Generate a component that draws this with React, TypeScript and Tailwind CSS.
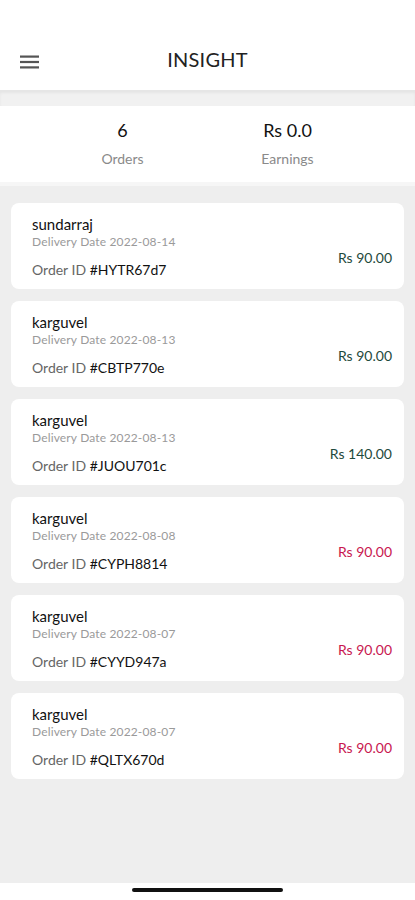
import React from "react";

type Order = { name: string; date: string; id: string; price: string; paid: boolean };

const orders: Order[] = [
  { name: "sundarraj", date: "2022-08-14", id: "#HYTR67d7", price: "Rs 90.00", paid: true },
  { name: "karguvel", date: "2022-08-13", id: "#CBTP770e", price: "Rs 90.00", paid: true },
  { name: "karguvel", date: "2022-08-13", id: "#JUOU701c", price: "Rs 140.00", paid: true },
  { name: "karguvel", date: "2022-08-08", id: "#CYPH8814", price: "Rs 90.00", paid: false },
  { name: "karguvel", date: "2022-08-07", id: "#CYYD947a", price: "Rs 90.00", paid: false },
  { name: "karguvel", date: "2022-08-07", id: "#QLTX670d", price: "Rs 90.00", paid: false },
];

export default function App() {
  return (
    <div
      className="w-[415px] h-[900px] flex flex-col bg-white overflow-hidden"
      style={{ fontFamily: "Lato, 'Noto Sans', sans-serif" }}
    >
      {/* Header */}
      <div className="h-[90px] shrink-0 relative flex items-end pb-[15px] px-[20px] bg-white">
        <svg width="19" height="14" viewBox="0 0 19 14" className="mb-[6px]">
          <rect x="0" y="0.5" width="19" height="2.2" fill="#555" />
          <rect x="0" y="5.9" width="19" height="2.2" fill="#555" />
          <rect x="0" y="11.3" width="19" height="2.2" fill="#555" />
        </svg>
        <div className="absolute left-0 right-0 bottom-[16px] text-center text-[20px] text-[#222] tracking-[0.2px]">
          INSIGHT
        </div>
      </div>
      <div className="h-[16px] shrink-0 bg-[#f1f1f1] border-t border-[#e6e6e6] shadow-[inset_0_2px_3px_rgba(0,0,0,0.05)]" />
      {/* Stats */}
      <div className="h-[76px] shrink-0 bg-white flex pl-[40px] pr-[45px] pt-[12px]">
        <div className="flex-1 flex flex-col items-center">
          <div className="text-[18px] text-[#111] leading-[24px]">6</div>
          <div className="text-[14px] text-[#8a8a8a] leading-[20px] mt-[7px]">Orders</div>
        </div>
        <div className="flex-1 flex flex-col items-center">
          <div className="text-[18px] text-[#111] leading-[24px]">Rs 0.0</div>
          <div className="text-[14px] text-[#8a8a8a] leading-[20px] mt-[7px]">Earnings</div>
        </div>
      </div>
      {/* List */}
      <div className="flex-1 bg-[#eeeeee] flex flex-col">
        <div className="h-[4px] bg-[#f6f6f6]" />
        <div className="flex flex-col gap-[12px] px-[11px] pt-[17px]">
          {orders.map((o, i) => (
            <div key={i} className="h-[86px] bg-white rounded-[8px] flex pl-[21px] pr-[12px]">
              <div className="flex-1 flex flex-col pt-[11px]">
                <div className="text-[15px] leading-[20px] text-[#111]">{o.name}</div>
                <div className="text-[12px] leading-[15px] text-[#9a9a9a] tracking-[0.15px]">Delivery Date {o.date}</div>
                <div className="text-[14px] leading-[18px] mt-[12px] text-[#666]">
                  Order ID <span className="text-[#111]">{o.id}</span>
                </div>
              </div>
              <div className="flex items-center pt-[22px]">
                <span className={"text-[14px] " + (o.paid ? "text-[#1e4a3c]" : "text-[#c8174f]")}>
                  {o.price}
                </span>
              </div>
            </div>
          ))}
        </div>
      </div>
      <div className="h-[17px] shrink-0 bg-white flex justify-center pt-[5px]">
        <div className="w-[151px] h-[4px] rounded-full bg-[#111]" />
      </div>
    </div>
  );
}
